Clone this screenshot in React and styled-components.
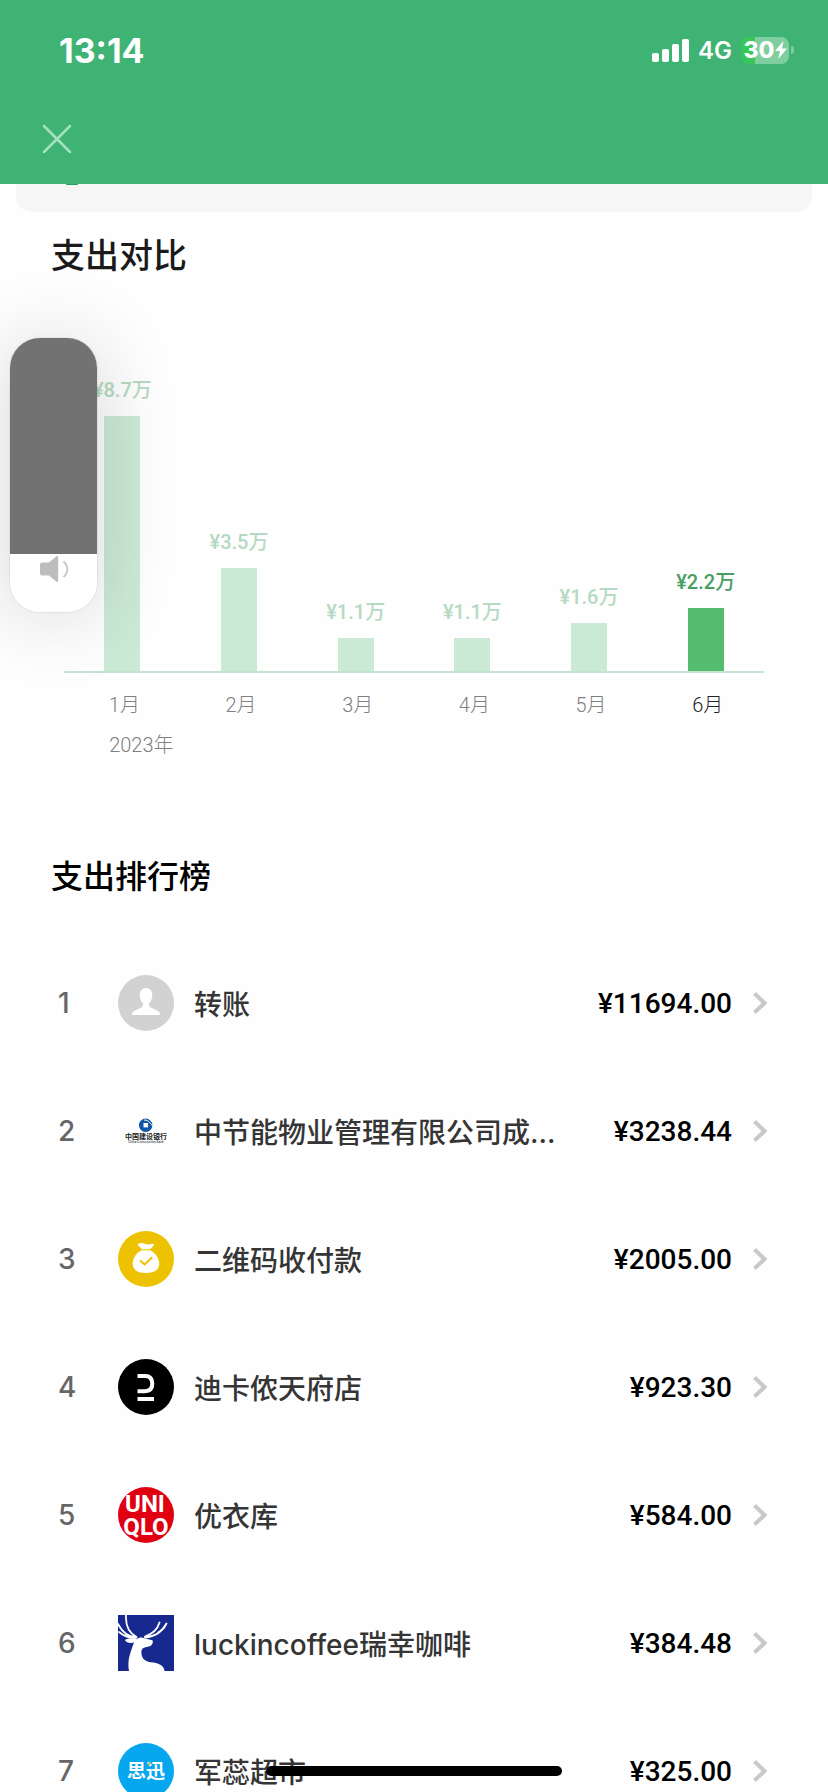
import React, { useState } from "react";
import styled, { createGlobalStyle } from "styled-components";

const GlobalStyle = createGlobalStyle`
  * {
    box-sizing: border-box;
    margin: 0;
    padding: 0;
  }

  :root {
    --font-text: Inter, "Noto Sans CJK SC", sans-serif;
    --font-number: Roboto, "Noto Sans CJK SC", sans-serif;
    --green: #3fb373;
  }

  body {
    background: #fefefe;
    font-family: var(--font-text);
  }
`;

const Screen = styled.div`
  height: 100vh;
  display: flex;
  flex-direction: column;
  overflow: hidden;
`;

const Header = styled.header`
  flex-shrink: 0;
  background: var(--green);
  color: white;
  padding: 30px 34px 20px 32px;
`;

const StatusBar = styled.div`
  display: flex;
  justify-content: space-between;
  align-items: center;
  height: 40px;
  padding-left: 27px;

  time {
    font-size: 34px;
    font-weight: 700;
  }
`;

const StatusIcons = styled.div`
  display: flex;
  align-items: center;
  gap: 9px;

  .network {
    font-size: 24px;
    font-weight: 600;
  }
`;

const Signal = styled.div`
  display: flex;
  align-items: flex-end;
  gap: 3px;

  span {
    width: 7px;
    border-radius: 2px;
    background: white;
  }
  span:nth-child(1) {
    height: 9px;
  }
  span:nth-child(2) {
    height: 13px;
  }
  span:nth-child(3) {
    height: 18px;
  }
  span:nth-child(4) {
    height: 23px;
  }
`;

const Battery = styled.div`
  display: flex;
  align-items: center;
  gap: 2px;

  .cell {
    display: flex;
    align-items: center;
    justify-content: center;
    width: 48px;
    height: 27px;
    border-radius: 8px;
    background: linear-gradient(to right, #36c759 30%, #7fcea0 30%);
    font-size: 23px;
    font-weight: 800;
  }

  .cap {
    width: 3px;
    height: 8px;
    border-radius: 0 4px 4px 0;
    background: #7fcea0;
  }
`;

const CloseButton = styled.button`
  display: flex;
  align-items: center;
  justify-content: center;
  width: 50px;
  height: 50px;
  margin-top: 44px;
  border: none;
  background: none;
  color: #a6e2c0;
  cursor: pointer;
`;

const Content = styled.main`
  flex: 1;
  overflow-y: auto;
  scrollbar-width: none;
`;

const SummaryCard = styled.div`
  height: 28px;
  margin: 0 16px;
  padding-left: 50px;
  border-radius: 0 0 16px 16px;
  background: #f6f6f6;

  span {
    display: block;
    width: 12px;
    height: 1px;
    border-radius: 0 0 6px 6px;
    background: #259a5e;
  }
`;

const Title = styled.h2`
  padding: 0 51px;
  font-size: ${(props) => (props.$large ? 34 : 32)}px;
  line-height: 48px;
  font-weight: 500;
  color: ${(props) => (props.$large ? "#1a1a1a" : "#000")};
`;

const Compare = styled.section`
  padding-top: 20px;
`;

const Chart = styled.div`
  margin: 0 64px;
`;

const Plot = styled.div`
  display: flex;
  align-items: flex-end;
  height: 393px;
  border-bottom: 2px solid #c3e5d0;
`;

const Column = styled.div`
  flex: 1;
  display: flex;
  flex-direction: column;
  align-items: center;

  span {
    font-family: var(--font-number);
    font-size: 20px;
    line-height: 24px;
    font-weight: 500;
    color: ${(props) => (props.$active ? "#46a062" : "#b5dac1")};
    margin-bottom: 14px;
  }

  .bar {
    width: 36px;
    background: ${(props) => (props.$active ? "#55bb6f" : "#cbead5")};
  }
`;

const Months = styled.div`
  display: flex;
  padding-top: 12px;
`;

const Month = styled.div`
  flex: 1;
  display: flex;
  flex-direction: column;
  align-items: center;
  padding-left: 4px;
  font-family: var(--font-number);
  font-size: 20px;
  font-weight: 300;
  line-height: 40px;
  color: ${(props) => (props.$active ? "#222" : "#808080")};

  .year {
    padding-left: 34px;
  }
`;

const Ranking = styled.section`
  padding-top: 88px;

  ol {
    list-style: none;
    padding-top: 38px;
  }
`;

const Row = styled.a`
  display: flex;
  align-items: center;
  height: 128px;
  padding: 0 60px 0 58px;
  color: #353535;
  font-size: 28px;
  font-weight: 500;
  font-variant-ligatures: none;
  text-decoration: none;

  .rank {
    width: 60px;
    color: #666;
  }

  .logo {
    flex-shrink: 0;
    width: 56px;
    height: 56px;
    margin-right: 20px;
  }

  .name {
    flex: 1;
    min-width: 0;
    white-space: nowrap;
    overflow: hidden;
    text-overflow: ellipsis;
  }

  .amount {
    margin: 0 20px;
    font-family: var(--font-number);
    color: #000;
  }
`;

const Volume = styled.label`
  position: fixed;
  top: 338px;
  left: 10px;
  width: 87px;
  height: 274px;
  border-radius: 30px;
  box-shadow: 0 4px 80px rgba(0, 0, 0, 0.16), 0 0 2px rgba(0, 0, 0, 0.2);

  input {
    display: block;
    appearance: none;
    writing-mode: vertical-lr;
    direction: rtl;
    width: 100%;
    height: 100%;
    border-radius: 30px;
    cursor: pointer;
  }

  input::-webkit-slider-thumb {
    appearance: none;
    width: 87px;
    height: 1px;
  }

  svg {
    position: absolute;
    left: 30px;
    bottom: 29px;
    pointer-events: none;
  }
`;

const HomeIndicator = styled.div`
  position: fixed;
  bottom: 16px;
  left: 50%;
  width: 296px;
  height: 10px;
  margin-left: -148px;
  border-radius: 5px;
  background: #000;
`;

const months = [
  { month: "1月", label: "¥8.7万", height: 255, year: "2023年" },
  { month: "2月", label: "¥3.5万", height: 103 },
  { month: "3月", label: "¥1.1万", height: 33 },
  { month: "4月", label: "¥1.1万", height: 33 },
  { month: "5月", label: "¥1.6万", height: 48 },
  { month: "6月", label: "¥2.2万", height: 63, active: true },
];

const UserLogo = () => (
  <svg className="logo" viewBox="0 0 56 56">
    <circle cx="28" cy="28" r="28" fill="#d2d2d2" />
    <path
      fill="#fff"
      d="M28 13c-4 0-6.300 3-6.300 7 0 3.500 1.300 6.500 3.200 8.300v2.200c0 1-.7 1.600-1.700 2l-6.500 3.200c-1.800.9-2.700 2-2.700 3.500V40h28v-.8c0-1.500-.9-2.600-2.700-3.500l-6.500-3.200c-1-.4-1.700-1-1.700-2v-2.200c1.900-1.800 3.200-4.800 3.200-8.300 0-4-2.300-7-6.300-7z"
    />
  </svg>
);

const BankLogo = () => (
  <svg className="logo" viewBox="0 0 56 56">
    <circle cx="27.700" cy="22.200" r="6.700" fill="#0f57a4" />
    <path fill="#fff" d="M25.500 20h4.600v4.400h-4.600z" />
    <path fill="none" stroke="#fff" strokeWidth="1" d="M26 17.200c3-.6 5 1 9 6.300M28.500 14.500c3 1 4.500 3 6.500 5.500" />
    <text x="28" y="36" textAnchor="middle" fontSize="7" fontWeight="700" fill="#222">
      中国建设银行
    </text>
    <text x="28" y="40" textAnchor="middle" fontSize="3" fontWeight="500" fill="#333">
      China Construction Bank
    </text>
  </svg>
);

const MoneyBagLogo = () => (
  <svg className="logo" viewBox="0 0 56 56">
    <circle cx="28" cy="28" r="28" fill="#edc200" />
    <path
      fill="#fff"
      d="M20.300 13c1.500-1.600 4.300-1.300 6.300-.3 2.300 1.100 5 .9 8.400.1 1.200-.2 1.500.8.700 1.700-1.400 1.700-2.600 3-3.800 3.800H23.500c-.5-1.400-1.700-2.500-3-3.300-.8-.5-.9-1.300-.2-2z"
    />
    <path
      fill="#fff"
      d="M23.500 19.300h8.700c5.500 2.800 9 8.200 9 13.500 0 6-4.700 9.200-13.300 9.200s-13.200-3.200-13.200-9.200c0-5.300 3.400-10.700 8.800-13.500z"
    />
    <path fill="none" stroke="#edc200" strokeWidth="2" d="M22 29.500l4.600 4 7.600-7.300" />
  </svg>
);

const DecathlonLogo = () => (
  <svg className="logo" viewBox="0 0 56 56">
    <circle cx="28" cy="28" r="28" />
    <path
      fill="none"
      stroke="#fff"
      strokeWidth="4"
      d="M19.500 17h7.500c5 0 7.300 3 7.300 7.600s-2.300 7.600-7.300 7.600h-7.500M19.500 40h16.500"
    />
  </svg>
);

const UniqloLogo = () => (
  <svg className="logo" viewBox="0 0 56 56">
    <circle cx="28" cy="28" r="28" fill="#e00012" />
    <g
      fill="#fff"
      fontFamily="'Liberation Sans Narrow', Roboto, sans-serif"
      fontSize="24"
      fontWeight="700"
      textAnchor="middle"
    >
      <text x="27" y="25">UNI</text>
      <text x="28" y="48">QLO</text>
    </g>
  </svg>
);

const LuckinLogo = () => (
  <svg className="logo" viewBox="0 0 56 56">
    <path fill="#17298f" d="M0 0h56v56H0z" />
    <path
      fill="none"
      stroke="#fff"
      strokeWidth="1.800"
      strokeLinecap="round"
      d="M0 9c3.500 7 9 12.500 18 13.500M1 17c5 4.500 10 6 17 6M8 0c-.5 9 2 17.500 10.500 22M27 22.500c9.500-.8 17-5.500 21.500-14M27 21.500c7.500-2.500 12.500-7 14.500-14M40 17.500c2.500-1.200 4.500-2.800 6.500-5"
    />
    <path
      fill="#fff"
      d="M7 25c3-2.200 8-2 11.500-.8 2.500-2 6-2 8.500-.7l7.500 1.800c1 2-.3 4.500-2 5.700-2.500 1-5.500 1-7.500 2.300-1.500 1.400-1.800 3-1.500 5.700.5 4.500 3.500 7.500 9.500 8.300 7 .6 13 3 13.500 8.700H11c-2-11 1.500-18 3.500-24.500.5-1.500 1-2.500 1.500-4-3.500 1-7.500.7-9-2.500z"
    />
  </svg>
);

const SixunLogo = () => (
  <svg className="logo" viewBox="0 0 56 56">
    <circle cx="28" cy="28" r="28" fill="#06a7ef" />
    <text x="28" y="35" textAnchor="middle" fontSize="19" fontWeight="700" fill="#fff">
      思迅
    </text>
    <circle cx="31" cy="21" r="1.500" fill="#a9c94a" />
  </svg>
);

const ranking = [
  { name: "转账", amount: "¥11694.00", Logo: UserLogo },
  { name: "中节能物业管理有限公司成...", amount: "¥3238.44", Logo: BankLogo },
  { name: "二维码收付款", amount: "¥2005.00", Logo: MoneyBagLogo },
  { name: "迪卡侬天府店", amount: "¥923.30", Logo: DecathlonLogo },
  { name: "优衣库", amount: "¥584.00", Logo: UniqloLogo },
  { name: "luckincoffee瑞幸咖啡", amount: "¥384.48", Logo: LuckinLogo },
  { name: "军蕊超市", amount: "¥325.00", Logo: SixunLogo },
];

function VolumeSlider() {
  const [volume, setVolume] = useState(21);

  return (
    <Volume>
      <input
        type="range"
        aria-label="音量"
        value={volume}
        onChange={(e) => setVolume(Number(e.target.value))}
        style={{
          background: `linear-gradient(to top, #fff ${volume}%, #727272 ${volume}%)`,
        }}
      />
      <svg width="30" height="28" viewBox="0 0 30 28">
        <path fill="#bdbdbd" d="M2 7.500h7L16.500 1.200c.8-.6 1.700-.3 1.700.7v24.200c0 1-.9 1.300-1.700.7L9 20.500H2c-1.200 0-2-.8-2-2v-9c0-1.200.8-2 2-2z" />
        <path fill="none" stroke="#c8c8c8" strokeWidth="1.800" strokeLinecap="round" d="M24 7c4.500 4 4.500 10.500 0 14.500" />
      </svg>
    </Volume>
  );
}

function App() {
  return (
    <Screen>
      <GlobalStyle />
      <Header>
        <StatusBar>
          <time>13:14</time>
          <StatusIcons>
            <Signal>
              <span />
              <span />
              <span />
              <span />
            </Signal>
            <span className="network">4G</span>
            <Battery>
              <div className="cell">
                30
                <svg width="12" height="18" viewBox="0 0 12 18">
                  <path fill="#fff" d="M8.500 0L0 10h5L3.300 18 12 7.500H7z" />
                </svg>
              </div>
              <div className="cap" />
            </Battery>
          </StatusIcons>
        </StatusBar>
        <CloseButton aria-label="关闭">
          <svg width="30" height="30" viewBox="0 0 30 30">
            <path
              fill="none"
              stroke="currentColor"
              strokeWidth="2.500"
              strokeLinecap="round"
              d="M2 2l26 26M28 2L2 28"
            />
          </svg>
        </CloseButton>
      </Header>

      <Content>
        <SummaryCard>
          <span />
        </SummaryCard>

        <Compare>
          <Title $large>支出对比</Title>
          <Chart>
            <Plot>
              {months.map((item) => (
                <Column key={item.month} $active={item.active}>
                  <span>{item.label}</span>
                  <div className="bar" style={{ height: item.height }} />
                </Column>
              ))}
            </Plot>
            <Months>
              {months.map((item) => (
                <Month key={item.month} $active={item.active}>
                  <span>{item.month}</span>
                  {item.year && <span className="year">{item.year}</span>}
                </Month>
              ))}
            </Months>
          </Chart>
        </Compare>

        <Ranking>
          <Title>支出排行榜</Title>
          <ol>
            {ranking.map(({ name, amount, Logo }, index) => (
              <li key={name}>
                <Row href="#">
                  <span className="rank">{index + 1}</span>
                  <Logo />
                  <span className="name">{name}</span>
                  <span className="amount">{amount}</span>
                  <svg width="16" height="24" viewBox="0 0 16 24">
                    <path fill="none" stroke="#c9c9cc" strokeWidth="4" d="M2.500 2.500l10 9.500-10 9.500" />
                  </svg>
                </Row>
              </li>
            ))}
          </ol>
        </Ranking>
      </Content>

      <VolumeSlider />
      <HomeIndicator />
    </Screen>
  );
}

export default App;
